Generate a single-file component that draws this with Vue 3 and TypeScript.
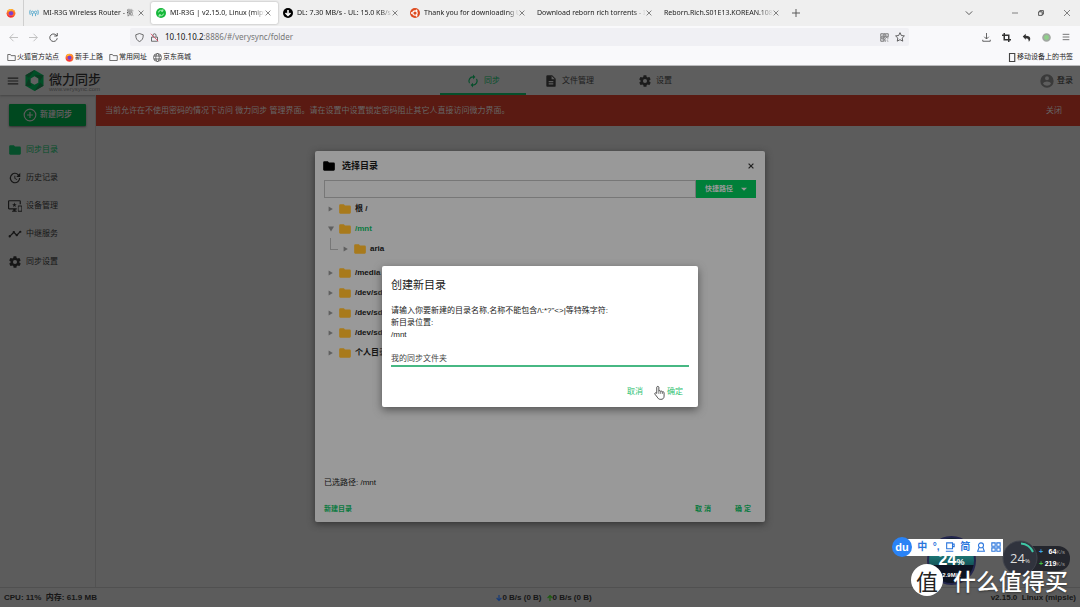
<script setup lang="ts">
import { ref } from 'vue'

interface Tab { title: string; icon: string; active?: boolean }
interface Item { label: string; icon: string; active?: boolean }
interface Node { label: string; open?: boolean; child?: string }

const icons: Record<string, string> = {
  folder: 'M10 4H4a2 2 0 0 0-2 2v12c0 1.100.900 2 2 2h16a2 2 0 0 0 2-2V8a2 2 0 0 0-2-2h-8z',
  history: 'M21 10.100h-6.800l2.700-2.800a7 7 0 0 0-9.800-.100 6.900 6.900 0 0 0 0 9.800 7 7 0 0 0 9.800 0 6.500 6.500 0 0 0 2-4.900H21a9 9 0 1 1-2.600-6.300L21 3zM12.500 8v4.300l3.500 2.100-.700 1.200L11 13V8z',
  devices: 'M23 11h-5a1 1 0 0 0-1 1v9c0 .500.500 1 1 1h5a1 1 0 0 0 1-1v-9a1 1 0 0 0-1-1zm0 9h-5v-7h5zM20 2H2a2 2 0 0 0-2 2v12c0 1.100.900 2 2 2h7v2H7v2h8v-2h-2v-2h2v-2H2V4h18v5h2V4a2 2 0 0 0-2-2zm-8 7l-1-3-1 3H7l2.500 1.800-1 3L11 12l2.500 1.800-1-3L15 9z',
  relay: 'M23 8a2 2 0 0 1-2.500 1.900L17 13.500a2 2 0 1 1-3.900 0L10.500 11a2 2 0 0 1-1 0L5 15.500A2 2 0 1 1 3.500 14L8 9.500a2 2 0 1 1 3.900 0l2.600 2.600a2 2 0 0 1 1 0L19 8.500A2 2 0 1 1 23 8z',
  gear: 'M19.400 13a7 7 0 0 0 0-2l2.100-1.600a.500.500 0 0 0 .100-.600l-2-3.500a.500.500 0 0 0-.600-.200l-2.500 1a7 7 0 0 0-1.700-1l-.400-2.700a.500.500 0 0 0-.500-.400h-4a.500.500 0 0 0-.500.400L9 5.100a8 8 0 0 0-1.700 1l-2.500-1a.500.500 0 0 0-.600.200l-2 3.500a.500.500 0 0 0 .100.600L4.500 11a8 8 0 0 0 0 2l-2.100 1.600a.500.500 0 0 0-.100.600l2 3.500c.100.200.400.300.600.200l2.500-1a7 7 0 0 0 1.700 1l.400 2.700c0 .200.200.400.500.400h4c.200 0 .500-.200.500-.400l.400-2.700a7 7 0 0 0 1.700-1l2.500 1c.200.100.500 0 .600-.200l2-3.500a.500.500 0 0 0-.100-.600zM12 15.500a3.500 3.500 0 1 1 0-7 3.500 3.500 0 0 1 0 7z',
  sync: 'M12 6v3l4-4-4-4v3a8 8 0 0 0-6.800 12.200l1.500-1.400A6 6 0 0 1 12 6zm6.800 1.700l-1.500 1.500A6 6 0 0 1 12 18v-3l-4 4 4 4v-3a8 8 0 0 0 6.800-12.300z',
  file: 'M14 2H6a2 2 0 0 0-2 2v16c0 1.100.900 2 2 2h12a2 2 0 0 0 2-2V8zm2 16H8v-2h8zm0-4H8v-2h8zm-3-5V3.500L18.500 9z',
  user: 'M12 2a10 10 0 1 0 0 20 10 10 0 0 0 0-20zm0 3a3 3 0 1 1 0 6 3 3 0 0 1 0-6zm0 14.200a7.200 7.200 0 0 1-6-3.200c0-2 4-3.100 6-3.100s6 1.100 6 3.100a7.200 7.200 0 0 1-6 3.200z',
  menu: 'M3 18h18v-2H3zm0-5h18v-2H3zm0-7v2h18V6z',
}

const tabs: Tab[] = [
  { title: 'MI-R3G Wireless Router - 微', icon: 'router' },
  { title: 'MI-R3G | v2.15.0, Linux (mips', icon: 'very', active: true },
  { title: 'DL: 7.30 MB/s - UL: 15.0 KB/s', icon: 'down' },
  { title: 'Thank you for downloading U', icon: 'ubuntu' },
  { title: 'Download reborn rich torrents - I', icon: '' },
  { title: 'Reborn.Rich.S01E13.KOREAN.108', icon: '' },
]
const bookmarks = [
  { label: '火狐官方站点', icon: 'folder' },
  { label: '新手上路', icon: 'fox' },
  { label: '常用网址', icon: 'folder' },
  { label: '京东商城', icon: 'globe' },
]
const topTabs: Item[] = [
  { label: '同步', icon: 'sync', active: true },
  { label: '文件管理', icon: 'file' },
  { label: '设置', icon: 'gear' },
]
const side: Item[] = [
  { label: '同步目录', icon: 'folder', active: true },
  { label: '历史记录', icon: 'history' },
  { label: '设备管理', icon: 'devices' },
  { label: '中继服务', icon: 'relay' },
  { label: '同步设置', icon: 'gear' },
]
const tree: Node[] = [
  { label: '根 /' },
  { label: '/mnt', open: true, child: 'aria' },
  { label: '/media' },
  { label: '/dev/sda1' },
  { label: '/dev/sda2' },
  { label: '/dev/sda3' },
  { label: '个人目录' },
]
const path = ref('')
const folderName = ref('我的同步文件夹')
</script>

<template>
  <div class="window">
    <header class="chrome">
      <div class="tabbar">
        <div class="pin">
          <svg class="i10" viewBox="0 0 16 16"><circle cx="8" cy="8.500" r="7" fill="#ff6a2b" /><path d="M2 6C3 2 7 1 8 2c4 0 7 3 7 7-1-3-3-5-6-5z" fill="#ffc02e" /><circle cx="8" cy="8.500" r="3.500" fill="#7b3fd0" /><path d="M1 8c2 5 7 6 12 4-3 4-11 4-12-4z" fill="#f0204e" /></svg>
        </div>
        <div v-for="t in tabs" :key="t.title" class="tab" :class="{ active: t.active }">
          <svg v-if="t.icon === 'router'" class="i10" viewBox="0 0 16 16" fill="none" stroke="#58a9cc" stroke-width="1.500"><circle cx="5.500" cy="7" r="2" /><circle cx="10.500" cy="7" r="2" /><path d="M2 3Q0 7 2 11M14 3q2 4 0 8M5.500 9v4M10.500 9v4" /></svg>
          <svg v-else-if="t.icon === 'very'" class="i10" viewBox="0 0 16 16"><circle cx="8" cy="8" r="8" fill="#16b83b" /><path d="M4 7a4 4 0 0 1 7-2M12 9a4 4 0 0 1-7 2M11 2v3H8M5 14v-3h3" fill="none" stroke="#b9f5c2" stroke-width="1.500" /></svg>
          <svg v-else-if="t.icon === 'down'" class="i10" viewBox="0 0 16 16"><circle cx="8" cy="8" r="8" fill="#000" /><path d="M8 3v9M4 8l4 4 4-4" fill="none" stroke="#fff" stroke-width="2.500" /></svg>
          <svg v-else-if="t.icon === 'ubuntu'" class="i10" viewBox="0 0 16 16"><circle cx="8" cy="8" r="8" fill="#dd4b1f" /><circle cx="8" cy="8" r="3.500" fill="none" stroke="#fff" stroke-width="1.800" /><g fill="#fff"><circle cx="3" cy="8" r="1.500" /><circle cx="10.500" cy="3.700" r="1.500" /><circle cx="10.500" cy="12.300" r="1.500" /></g></svg>
          <span class="tab-title">{{ t.title }}</span>
          <button class="x" aria-label="关闭标签页"><svg class="i6" viewBox="0 0 10 10"><path d="M1 1l8 8M9 1L1 9" /></svg></button>
        </div>
        <button class="x plus" aria-label="新标签页"><svg class="i8" viewBox="0 0 10 10"><path d="M5 0v10M0 5h10" /></svg></button>
        <div class="wincontrols">
          <button class="x chev" aria-label="列出标签页"><svg class="i8" viewBox="0 0 10 10"><path d="M1 3l4 4 4-4" /></svg></button>
          <button class="x" aria-label="最小化"><svg class="i6" viewBox="0 0 10 10"><path d="M0 5h10" /></svg></button>
          <button class="x" aria-label="还原"><svg class="i6" viewBox="0 0 10 10"><path d="M1 3h6v6H1zM3 3V1h6v6H7" stroke="#222" /></svg></button>
          <button class="x" aria-label="关闭"><svg class="i6" viewBox="0 0 10 10"><path d="M0 0l10 10M10 0L0 10" /></svg></button>
        </div>
      </div>
      <div class="navbar">
        <div class="navleft">
          <button class="x dim" aria-label="后退"><svg class="i9" viewBox="0 0 12 12"><path d="M12 6H1M6 1L1 6l5 5" /></svg></button>
          <button class="x dim" aria-label="前进"><svg class="i9" viewBox="0 0 12 12"><path d="M0 6h11M6 1l5 5-5 5" /></svg></button>
          <button class="x" aria-label="刷新"><svg class="i9" viewBox="0 0 12 12"><path d="M10.500 4A5 5 0 1 0 11 7M11 0v4H7" stroke-width="1.300" /></svg></button>
        </div>
        <div class="url">
          <svg class="i9 line" viewBox="0 0 12 12"><path d="M6 .700l5 1.700c0 5-1.500 7.500-5 9-3.500-1.500-5-4-5-9z" /></svg>
          <svg class="i9 line" viewBox="0 0 12 12"><path d="M2 5.500h8V11H2zM4 5V3a2 2 0 0 1 4 0v2" /><path d="M1 1l10 10" stroke="#e0405a" /></svg>
          <a class="address" href="#/verysync/folder"><b>10.10.10.2</b>:8886/#/verysync/folder</a>
          <svg class="i9" viewBox="0 0 12 12" fill="none" stroke="#555" stroke-width="1"><path d="M1 1h4v4H1zM7 1h4v4H7zM1 7h4v4H1z" /><path d="M2.500 3h1M8.500 3h1M2.500 9h1M7 7.500h2M10 7.500h1M7 9.500h1M9 9.500h2M7 11h2M10 11h1M6 0v12M0 6h12" stroke-dasharray="1 1" /></svg>
          <svg class="i10 line" viewBox="0 0 12 12"><path d="M6 .800l1.600 3.400 3.700.500-2.700 2.600.700 3.700L6 9.200 2.700 11l.700-3.700L.700 4.700l3.700-.500z" /></svg>
        </div>
        <div class="navright">
          <button class="x" aria-label="下载"><svg class="i9" viewBox="0 0 12 12"><path d="M6 0v8M3 5l3 3 3-3M1 9v2h10V9" /></svg></button>
          <button class="x" aria-label="截图"><svg class="i9" viewBox="0 0 12 12"><path d="M3 0v9h9M0 3h9v9" stroke="#333" stroke-width="2" /></svg></button>
          <button class="x" aria-label="撤销"><svg class="i9" viewBox="0 0 12 12"><path d="M1 4.500L5 1v2.500c4 0 6 1.500 6 4 0 2-1 3-2 4 0-3-1-4.500-4-4.500v2z" fill="#333" stroke="none" /></svg></button>
          <button class="x" aria-label="扩展"><svg class="i9" viewBox="0 0 12 12"><circle cx="6" cy="6" r="4.500" fill="#8fd08a" stroke="#a2a8a2" stroke-width="2.500" /></svg></button>
          <button class="x" aria-label="菜单"><svg class="i8" viewBox="0 0 12 12"><path d="M1 2h10M1 6h10M1 10h10" /></svg></button>
        </div>
      </div>
      <nav class="bookmarks">
        <a v-for="b in bookmarks" :key="b.label" href="#">
          <svg v-if="b.icon === 'folder'" class="i9 line" viewBox="0 0 12 12"><path d="M1 2h3.500l1 1.500H11V10H1z" /></svg>
          <svg v-else-if="b.icon === 'fox'" class="i9" viewBox="0 0 16 16"><circle cx="8" cy="8.500" r="7" fill="#ff6a2b" /><path d="M2 6C3 2 7 1 8 2c4 0 7 3 7 7-1-3-3-5-6-5z" fill="#ffc02e" /><circle cx="8" cy="8.500" r="3.500" fill="#7b3fd0" /><path d="M1 8c2 5 7 6 12 4-3 4-11 4-12-4z" fill="#f0204e" /></svg>
          <svg v-else class="i9 line" viewBox="0 0 12 12"><circle cx="6" cy="6" r="5.300" /><ellipse cx="6" cy="6" rx="2.300" ry="5.300" /><path d="M1 4h10M1 8h10" /></svg>
          {{ b.label }}
        </a>
        <a class="mobile" href="#"><svg class="i9 line" viewBox="0 0 12 12"><path d="M2 .700h7v10.600H2z" stroke-width="1.500" /></svg>移动设备上的书签</a>
      </nav>
    </header>

    <div class="app">
      <header class="apphead">
        <div class="brand">
          <button class="plain" aria-label="菜单"><svg class="i14" viewBox="0 0 24 24"><path :d="icons.menu" fill="#1c1c1c" /></svg></button>
          <svg class="logo" viewBox="0 0 20 22"><path d="M10 0l9.500 5.500v11L10 22 .500 16.500v-11z" fill="#004f27" /><path d="M10 0L4 8l-3.500-2.500zM19.500 5.500L10 5l6 6zM.500 16.500L4 9l3 8zM10 22l6-9 3.500 3.500z" fill="#0b3a22" /><path d="M10 6.500l4 2.300v4.500l-4 2.300-4-2.300V8.800z" fill="#626262" /></svg>
          <div class="brandname"><strong>微力同步</strong><small>www.verysync.com</small></div>
        </div>
        <nav class="toptabs">
          <a v-for="t in topTabs" :key="t.label" href="#" :class="{ active: t.active }">
            <svg class="i14" viewBox="0 0 24 24"><path :d="icons[t.icon]" fill="currentColor" fill-rule="evenodd" /></svg>{{ t.label }}
          </a>
        </nav>
        <a class="login" href="#"><svg class="i16" viewBox="0 0 24 24"><path :d="icons.user" fill="#3a3a3a" fill-rule="evenodd" /></svg>登录</a>
      </header>
      <div class="body">
        <aside>
          <button class="newsync"><svg class="i14" viewBox="0 0 24 24"><path d="M12 2a10 10 0 1 0 0 20 10 10 0 0 0 0-20zM12 7v10M7 12h10" fill="none" stroke="#5c5c5c" stroke-width="2" /></svg>新建同步</button>
          <a v-for="s in side" :key="s.label" href="#" :class="{ active: s.active }">
            <svg class="i14" viewBox="0 0 24 24"><path :d="icons[s.icon]" fill="currentColor" fill-rule="evenodd" /></svg>{{ s.label }}
          </a>
        </aside>
        <main>
          <div class="alert"><span>当前允许在不使用密码的情况下访问 微力同步 管理界面。请在设置中设置锁定密码阻止其它人直接访问微力界面。</span><button class="plain">关闭</button></div>
        </main>
      </div>
      <footer class="status">
        <span>CPU: 11%&nbsp; 内存: 61.9 MB</span>
        <span class="speed"><svg class="i6" viewBox="0 0 10 10"><path d="M5 0v9M1 5l4 4 4-4" stroke="#153a78" /></svg>0 B/s (0 B)<svg class="i6 up" viewBox="0 0 10 10"><path d="M5 10V1M1 5l4-4 4 4" stroke="#1d5c10" /></svg>0 B/s (0 B)</span>
        <span class="ver">v2.15.0&nbsp; Linux (mipsle)</span>
      </footer>

      <div class="layer">
        <section class="picker" role="dialog" aria-label="选择目录">
          <div class="pickhead">
            <svg class="i14" viewBox="0 0 24 24"><path :d="icons.folder" fill="#000" /></svg>
            <h2>选择目录</h2>
            <button class="x dark" aria-label="关闭"><svg class="i6" viewBox="0 0 10 10"><path d="M1 1l8 8M9 1L1 9" /></svg></button>
          </div>
          <div class="pathrow">
            <input v-model="path" type="text" aria-label="目录路径">
            <button>快捷路径<svg class="i6" viewBox="0 0 10 10"><path d="M0 3h10L5 8z" fill="#999" /></svg></button>
          </div>
          <ul class="tree">
            <li v-for="n in tree" :key="n.label">
              <div class="row" :class="{ open: n.open }">
                <svg class="i6" viewBox="0 0 10 10"><path :d="n.open ? 'M0 1h10L5 9z' : 'M1 1v8l7-4z'" fill="#5f5f5f" /></svg>
                <svg class="i14" viewBox="0 0 24 24"><path :d="icons.folder" fill="#a87a1c" /></svg>{{ n.label }}
              </div>
              <div v-if="n.child" class="row child">
                <i class="elbow" />
                <svg class="i6" viewBox="0 0 10 10"><path d="M1 1v8l7-4z" fill="#5f5f5f" /></svg>
                <svg class="i14" viewBox="0 0 24 24"><path :d="icons.folder" fill="#a87a1c" /></svg>{{ n.child }}
              </div>
            </li>
          </ul>
          <p class="chosen">已选路径: /mnt</p>
          <div class="pickfoot"><button class="flat">新建目录</button><button class="flat cancel">取 消</button><button class="flat">确 定</button></div>
        </section>
      </div>

      <div class="layer">
        <form class="prompt" role="dialog" aria-label="创建新目录" @submit.prevent>
          <h2>创建新目录</h2>
          <label for="fname">请输入你要新建的目录名称,名称不能包含/\:*?"&lt;&gt;|等特殊字符:<br>新目录位置:<br>/mnt</label>
          <input id="fname" v-model="folderName" type="text">
          <div class="actions"><button type="button" class="flat">取消</button><button type="submit" class="flat">确定</button></div>
          <svg class="hand" viewBox="0 0 12 16"><path d="M3 9V2.200a1.200 1.200 0 0 1 2.300 0V6.500c.500-.800 1.800-.600 2 .300.600-.600 1.700-.300 1.900.500.800-.400 1.800 0 1.800 1V12c0 2.500-1.500 3.500-3.500 3.500C5 15.500 4.500 14.500 3.500 13L1 9.800c-.700-1 .700-2 1.500-1.200z" fill="#fff" stroke="#333" stroke-width=".900" /><path d="M5.300 6.500v3M7.300 7v2.500M9.200 7.500v2" stroke="#333" stroke-width=".700" /></svg>
        </form>
      </div>

      <div class="desktop">
        <div class="ball"><strong>24<small>%</small></strong><span>2.9M/s</span></div>
        <div class="netpill">
          <span><i class="blue">+</i><b>64</b><small>K/s</small></span>
          <span><i>+</i><b>219</b><small>K/s</small></span>
        </div>
        <div class="gauge">
          <svg viewBox="0 0 36 36"><circle cx="18" cy="18" r="17" fill="#30333d" stroke="#41444d" /><path d="M19 3.500A14.500 14.500 0 0 1 31 12" fill="none" stroke="#3fc7a5" stroke-width="2" /></svg>
          <span>24<small>%</small></span>
        </div>
        <div class="ime">
          <span class="du">du</span><span>中</span><span>°,</span>
          <svg viewBox="0 0 12 12"><path d="M2 1h7v7H2zM9 2.500h2v3H9M1 11h9" /></svg>
          <span>简</span>
          <svg viewBox="0 0 12 12"><circle cx="6" cy="4" r="3" /><path d="M4 6L2 11h8L8 6" /></svg>
          <svg viewBox="0 0 12 12"><path d="M1 1h4v4H1zM7 1h4v4H7zM1 7h4v4H1zM7 7h4v4H7z" /></svg>
        </div>
        <div class="mark"><span class="seal">值</span><strong>什么值得买</strong></div>
      </div>
    </div>
  </div>
</template>

<style>
body { margin: 0; }
</style>

<style scoped>
.window { min-height: 100vh; display: flex; flex-direction: column; font: 8px/12px "Liberation Sans", "Noto Sans CJK SC", sans-serif; color: #111; }
.window * { box-sizing: border-box; }
svg { display: block; flex: none; overflow: visible; }
button { font: inherit; color: inherit; border: 0; padding: 0; background: none; }
a { color: inherit; text-decoration: none; }
h2, p, ul { margin: 0; padding: 0; }
.i6 { width: 6px; height: 6px; }
.i8 { width: 8px; height: 8px; }
.i9 { width: 9px; height: 9px; }
.i10 { width: 10px; height: 10px; }
.i14 { width: 14px; height: 14px; }
.i16 { width: 16px; height: 16px; }
.line { fill: none; stroke: #444; stroke-width: 1; }
.x { display: grid; place-items: center; }
.x svg { fill: none; stroke: #555; stroke-width: 1.200; }
.x.dim svg { stroke: #bbb; }

.chrome { font-family: "Noto Sans", "Noto Sans CJK SC", sans-serif; background: #f9f9fb; border-bottom: 1px solid #c4c4c6; color: #222; }
.tabbar { height: 26px; display: flex; align-items: center; background: #efefef; }
.pin { width: 24px; height: 26px; padding-left: 6px; display: flex; align-items: center; border-right: 1px solid #cfcfcf; }
.tab { width: 127px; height: 22px; padding: 0 7px 0 5px; display: flex; align-items: center; font-size: 7px; border-radius: 2px; }
.tab > svg { margin-right: 4px; }
.tab.active { background: #fff; box-shadow: 0 0 2px #999; }
.tab-title { flex: 1; overflow: hidden; white-space: nowrap; mask-image: linear-gradient(to right, #000 88%, transparent); }
.plus { width: 20px; }
.wincontrols { margin-left: auto; padding-right: 10px; display: flex; gap: 20px; }
.chev { margin-right: 19px; }
.navbar { height: 22px; display: flex; align-items: center; }
.navleft { width: 130px; padding-left: 9px; display: flex; gap: 11px; }
.url { flex: 1; height: 18px; padding: 0 4px 0 5px; display: flex; align-items: center; gap: 6px; background: #f0f0f4; border-radius: 2px; }
.address { flex: 1; color: #777; }
.address b { font-weight: 400; color: #111; }
.navright { width: 171px; padding-right: 10px; display: flex; justify-content: flex-end; align-items: center; gap: 11px; }
.bookmarks { height: 17px; padding: 1px 7px 0; display: flex; align-items: center; gap: 6px; font-size: 7px; }
.bookmarks a { display: flex; align-items: center; gap: 1px; }
.bookmarks .mobile { margin-left: auto; gap: 0; }

.app { position: relative; flex: 1; display: flex; flex-direction: column; background: #5c5c5c; }
.apphead { height: 29px; display: grid; grid-template-columns: 96px 1fr 38px; background: #5e5e5e; box-shadow: 0 1px 2px #444; }
.brand { padding-left: 6px; display: flex; align-items: center; gap: 5px; }
.logo { width: 19px; height: 21px; }
.brandname { padding-top: 2px; display: flex; flex-direction: column; color: #151515; white-space: nowrap; }
.brandname strong { font-size: 13px; line-height: 15px; font-weight: 500; }
.brandname small { font-size: 6px; line-height: 5px; color: #3a3a3a; }
.toptabs { display: flex; justify-content: center; }
.toptabs a { width: 86px; display: flex; align-items: center; justify-content: center; gap: 4px; color: #1c1c1c; border-bottom: 2px solid transparent; padding-top: 2px; }
.toptabs a.active { color: #064f2b; border-color: #064f2b; }
.login { display: flex; align-items: center; justify-content: flex-end; gap: 2px; padding-right: 7px; white-space: nowrap; }
.body { flex: 1; display: flex; }
aside { width: 96px; padding-top: 9px; border-right: 1px solid #525252; }
.newsync { width: 77px; height: 22px; margin: 0 0 9px 9px; display: flex; align-items: center; justify-content: center; gap: 3px; background: #00481f; color: #5c5c5c; border-radius: 1px; font-weight: 700; box-shadow: 0 1px 2px #333; }
aside a { height: 28px; padding: 1px 0 0 8px; display: flex; align-items: center; gap: 4px; color: #161616; }
aside a.active { color: #064f2b; }
main { flex: 1; }
.alert { height: 31px; padding: 1px 18px 0 9px; display: flex; align-items: center; justify-content: space-between; background: #5a1a12; color: #666; }
.status { height: 20px; padding: 0 4px; display: grid; grid-template-columns: 1fr auto 1fr; align-items: center; border-top: 1px solid #505050; font-weight: 700; color: #161616; }
.speed { padding-left: 8px; display: flex; align-items: center; }
.speed svg { fill: none; stroke-width: 2; }
.speed .up { margin-left: 5px; }
.ver { text-align: right; }

.layer { position: absolute; inset: 0; display: grid; place-items: center; }
.picker { width: 450px; padding: 8px 9px 2px; background: #999; border-radius: 2px; box-shadow: 0 2px 7px #333; }
.pickhead { height: 14px; margin: 0 2px 7px -2px; display: flex; align-items: center; gap: 6px; }
.pickhead h2 { flex: 1; font-size: 9px; line-height: 14px; font-weight: 700; color: #111; }
.dark svg { stroke: #222; stroke-width: 2; }
.pathrow { height: 18px; display: flex; }
.pathrow input { flex: 1; border: 1px solid #777; background: none; padding: 0 4px; font: inherit; }
.pathrow button { width: 60px; display: flex; align-items: center; justify-content: center; gap: 8px; background: #007f39; color: #999; font-size: 7px; font-weight: 700; }
.tree { height: 275px; padding: 1px 4px; list-style: none; font-weight: 700; }
.row { height: 20px; display: flex; align-items: center; gap: 3px; color: #111; }
.row .i6 { margin-right: 1px; }
.row.open { color: #0a7a40; }
.child { margin-bottom: 4px; }
.elbow { width: 8px; height: 12px; margin: -10px 2px 0 2px; border: solid #777; border-width: 0 0 1px 1px; }
.chosen { height: 20px; line-height: 20px; }
.pickfoot { height: 23px; margin-top: 4px; padding-right: 5px; display: flex; align-items: center; gap: 24px; }
.flat { color: #0a7a40; }
.pickfoot .flat { font-size: 7px; font-weight: 700; }
.cancel { margin-left: auto; }
.prompt { position: relative; width: 316px; padding: 9px 9px 7px; background: #fff; border-radius: 2px; box-shadow: 0 3px 8px #555; }
.prompt h2 { font-size: 11px; line-height: 20px; font-weight: 400; color: #222; margin-bottom: 10px; }
.prompt label { display: block; color: #222; }
.prompt input { display: block; width: 100%; height: 18px; margin-top: 8px; border: 0; border-bottom: 2px solid #47b883; padding: 0; font: inherit; color: #444; outline: 0; }
.actions { margin-top: 16px; height: 17px; padding-right: 6px; display: flex; justify-content: flex-end; gap: 24px; }
.actions .flat { color: #2fbf71; }
.hand { position: absolute; right: 33px; bottom: 7px; width: 11px; height: 15px; }

.desktop { position: absolute; right: 0; bottom: 0; width: 190px; height: 72px; }
.desktop > div { position: absolute; }
.ball { left: 37px; top: 1px; width: 49px; height: 49px; border-radius: 50%; border: 2px solid #23254d; background: linear-gradient(#12222b 35%, #1d7a78 36%, #14565a 60%, #0d1322 61%); color: #fff; display: flex; flex-direction: column; align-items: center; padding-top: 15px; }
.ball strong { font-size: 16px; line-height: 14px; }
.ball small { font-size: 9px; }
.ball span { font-size: 6px; font-weight: 700; }
.netpill { left: 128px; top: 11px; width: 52px; height: 25px; padding-right: 5px; border-radius: 0 12px 12px 0; background: #24262d; color: #fff; font-size: 7px; }
.netpill span { display: flex; justify-content: flex-end; align-items: center; height: 12px; }
.netpill small { font-size: 6px; color: #999; }
.netpill i { margin-right: auto; padding-left: 21px; font-style: normal; font-weight: 700; color: #42c044; }
.netpill i.blue { color: #3da8ea; }
.gauge { left: 112px; top: 5px; width: 36px; height: 36px; }
.gauge span { position: absolute; inset: 0; text-align: center; font: 13px/36px "Open Sans", sans-serif; color: #ddd; }
.gauge small { font-size: 6px; }
.ime { left: 2px; top: 2px; width: 111px; height: 20px; padding-right: 2px; display: flex; align-items: center; justify-content: space-between; background: linear-gradient(#fff, #fff) 10px 2px / 101px 17px no-repeat; color: #2b76dc; font-size: 10px; font-weight: 700; }
.ime svg { width: 10px; height: 10px; fill: none; stroke: #2b76dc; stroke-width: 1.300; }
.du { width: 20px; height: 20px; border-radius: 50%; background: #2a83f6; color: #fff; font-size: 11px; line-height: 20px; text-align: center; }
.mark { right: 12px; bottom: 11px; display: flex; align-items: center; gap: 10px; white-space: nowrap; color: #fff; }
.mark strong { font: 500 23px/32px "Noto Sans CJK SC", sans-serif; text-shadow: 0 1px 2px #333; }
.seal { width: 32px; height: 32px; border-radius: 50%; background: #fff; color: #222; font: 22px/32px "Noto Sans CJK SC", sans-serif; text-align: center; }
</style>
